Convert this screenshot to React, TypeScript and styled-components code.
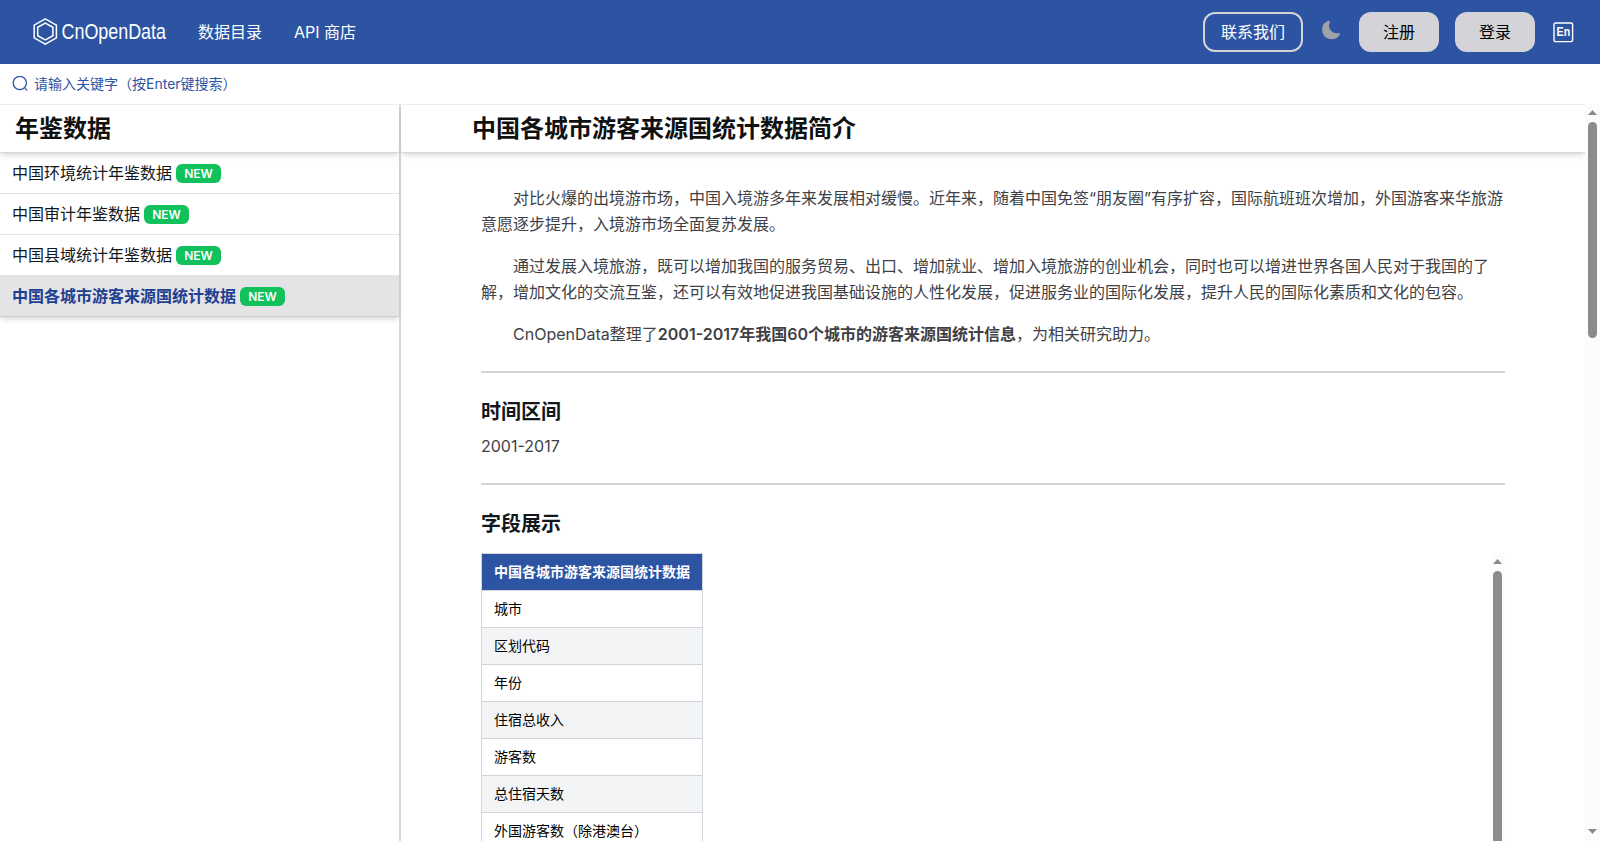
import React from "react";
import styled, { createGlobalStyle, css } from "styled-components";

const GlobalStyle = createGlobalStyle`
  *, *::before, *::after { box-sizing: border-box; }
  html, body { margin: 0; padding: 0; background: #fff; overflow: hidden; }
  body { font-family: Inter, "Noto Sans CJK SC", sans-serif; font-size: 16px; line-height: 24px; color: #11181c; }
  h1, h2, h3, p, ul { margin: 0; padding: 0; }
`;

const Page = styled.div`
  display: flex;
  flex-direction: column;
  height: 841px;
  overflow: hidden;
`;

const Header = styled.header`
  display: flex;
  align-items: center;
  height: 64px;
  flex: none;
  padding: 0 26px 0 32px;
  background: #2d54a3;
  color: #fff;
`;

const Logo = styled.svg`
  display: block;
  width: 144px;
  height: 40px;
  margin-right: 22px;
`;

const NavLink = styled.a`
  margin-right: 32px;
  white-space: nowrap;
`;

const Spacer = styled.div`
  flex: 1;
`;

const Button = styled.button<{ $outline?: boolean }>`
  height: 40px;
  width: ${(p) => (p.$outline ? 100 : 80)}px;
  padding: 0;
  border: ${(p) => (p.$outline ? "2px solid #d4d4d8" : "0")};
  border-radius: 12px;
  background: ${(p) => (p.$outline ? "transparent" : "#d4d4d8")};
  color: ${(p) => (p.$outline ? "#fff" : "#000")};
  font: inherit;
  & + & { margin-left: 16px; }
`;

const Moon = styled.svg`
  display: block;
  width: 22px;
  height: 22px;
  margin: 0 17px 4px;
`;

const LangIcon = styled.svg`
  display: block;
  width: 21px;
  height: 21px;
  margin: 1px 0 0 18px;
`;

const SearchBar = styled.div`
  display: flex;
  align-items: center;
  flex: none;
  height: 41px;
  padding-left: 12px;
  gap: 6px;
  border-bottom: 1px solid #ececee;
  color: #2d54a3;
  font-size: 14px;
  svg { display: block; }
`;

const Body = styled.div`
  display: flex;
  flex: 1;
  min-height: 0;
`;

const Sidebar = styled.aside`
  width: 401px;
  flex: none;
  border-right: 2px solid #d9d9db;
`;

const titleBar = css`
  height: 48px;
  border-bottom: 1px solid #d9d9db;
  box-shadow: 0 4px 6px -1px rgba(0, 0, 0, 0.1), 0 2px 4px -2px rgba(0, 0, 0, 0.1);
  font-size: 24px;
  line-height: 48px;
  font-weight: 600;
  color: #111;
`;

const SideTitle = styled.h2`
  ${titleBar}
  padding-left: 15px;
`;

const Menu = styled.ul`
  list-style: none;
  box-shadow: 0 4px 6px -1px rgba(0, 0, 0, 0.1), 0 2px 4px -2px rgba(0, 0, 0, 0.1);
`;

const MenuItem = styled.li<{ $active?: boolean }>`
  display: flex;
  align-items: center;
  gap: 4px;
  height: 41px;
  padding-left: 12px;
  border-bottom: 1px solid ${(p) => (p.$active ? "#cfcfd3" : "#e4e4e7")};
  background: ${(p) => (p.$active ? "#e4e4e7" : "transparent")};
  color: ${(p) => (p.$active ? "#1e4091" : "#11181c")};
  font-weight: ${(p) => (p.$active ? 600 : 400)};
`;

const Badge = styled.span`
  width: 45px;
  height: 19px;
  border-radius: 6px;
  background: #10c15c;
  color: #fff;
  font-size: 12px;
  line-height: 19px;
  font-weight: 600;
  text-align: center;
`;

const Main = styled.main`
  flex: 1;
  min-width: 0;
`;

const MainTitle = styled.h1`
  ${titleBar}
  padding-left: 71px;
`;

const Article = styled.article`
  width: 1024px;
  margin: 32px 0 0 80px;
  color: #3f3f46;
`;

const Paragraph = styled.p`
  margin-bottom: 16px;
  line-height: 26px;
  text-indent: 32px;
  white-space: nowrap;
  strong { font-weight: 600; }
  &:last-of-type { margin-bottom: 24px; }
`;

const Intro = styled.section``;

const Rule = styled.div`
  height: 2px;
  background: #d4d4d8;
`;

const Heading = styled.h3`
  padding: 25px 0 7px;
  font-size: 20px;
  line-height: 28px;
  font-weight: 600;
  color: #11181c;
`;

const Period = styled.p`
  line-height: 26px;
  padding-bottom: 24px;
`;

const TableArea = styled.div`
  display: flex;
  justify-content: space-between;
  align-items: stretch;
  margin-top: 8px;
  height: 440px;
`;

const Table = styled.div`
  width: 222px;
  border: 1px solid #d1d5db;
  border-bottom: 0;
  font-size: 14px;
  color: #000;
`;

const Cell = styled.div<{ $head?: boolean }>`
  height: 37px;
  padding-left: 12px;
  line-height: 36px;
  border-bottom: 1px solid #d1d5db;
  white-space: nowrap;
  &:nth-child(odd) { background: #f3f4f6; }
  ${(p) =>
    p.$head &&
    css`
      && { background: #2d54a3; }
      color: #fff;
      font-weight: 600;
    `}
`;

const Track = styled.div<{ $page?: boolean }>`
  display: flex;
  flex-direction: column;
  align-items: center;
  flex: none;
  width: 15px;
  margin-top: ${(p) => (p.$page ? -1 : 0)}px;
  background: #fcfcfc;
`;

const Thumb = styled.div<{ $height: number }>`
  width: 9px;
  height: ${(p) => p.$height}px;
  border-radius: 5px;
  background: #8b8b8b;
  margin-top: 7px;
`;

const Arrow = styled.div<{ $down?: boolean }>`
  width: 9px;
  height: 5px;
  margin: ${(p) => (p.$down ? "auto 0 7px" : "6px 0 0")};
  background: #8b8b8b;
  clip-path: ${(p) =>
    p.$down ? "polygon(0 0, 100% 0, 50% 100%)" : "polygon(0 100%, 100% 100%, 50% 0)"};
`;

const menu = [
  { label: "中国环境统计年鉴数据" },
  { label: "中国审计年鉴数据" },
  { label: "中国县域统计年鉴数据" },
  { label: "中国各城市游客来源国统计数据", active: true },
];

const fields = ["城市", "区划代码", "年份", "住宿总收入", "游客数", "总住宿天数", "外国游客数（除港澳台）"];

export default function App() {
  return (
    <>
      <GlobalStyle />
      <Page>
        <Header>
          <Logo viewBox="0 -4 144 40">
            <g fill="none" stroke="#fff" strokeLinejoin="miter">
              <path d="M13.3 2.9 L24.4 9.2 V21.8 L13.3 28.1 L2.2 21.8 V9.2 Z" strokeWidth="1.5" />
              <path d="M13.3 7.1 L20.9 11.3 V19.7 L13.3 23.9 L5.7 19.7 V11.3 Z" strokeWidth="1.5" />
            </g>
            <text x="29.5" y="23.2" fill="#fff" fontFamily="Liberation Sans" fontSize="21.5" textLength="104.5" lengthAdjust="spacingAndGlyphs">
              CnOpenData
            </text>
          </Logo>
          <NavLink>数据目录</NavLink>
          <NavLink>API 商店</NavLink>
          <Spacer />
          <Button $outline>联系我们</Button>
          <Moon viewBox="0 0 24 24">
            <path
              d="M21.53 15.93c-.16-.27-.61-.69-1.73-.49a8.46 8.46 0 0 1-1.88.13 8.409 8.409 0 0 1-5.91-2.82 8.068 8.068 0 0 1-1.44-8.66c.44-1.01.13-1.54-.09-1.76s-.77-.55-1.83-.11a10.318 10.318 0 0 0-6.32 10.21 10.475 10.475 0 0 0 7.04 8.99 10 10 0 0 0 2.89.55c.16.01.32.02.48.02a10.5 10.5 0 0 0 8.47-4.27c.67-.93.49-1.519.32-1.79z"
              fill="#a1a1aa"
            />
          </Moon>
          <Button>注册</Button>
          <Button>登录</Button>
          <LangIcon viewBox="0 0 21 21">
            <rect x="1" y="1" width="18.6" height="18.6" rx="1.5" fill="none" stroke="#fff" strokeWidth="1.4" />
            <text x="3.6" y="14.4" fill="#fff" fontFamily="Liberation Sans" fontWeight="700" fontSize="12" textLength="13.6" lengthAdjust="spacingAndGlyphs">
              En
            </text>
          </LangIcon>
        </Header>
        <SearchBar>
          <svg width="16" height="16" viewBox="0 0 16 16" fill="none" stroke="#2d54a3" strokeWidth="1.3" strokeLinecap="round">
            <circle cx="7.8" cy="7" r="6.6" />
            <path d="M13.3 12.6 L14.8 14.1" />
          </svg>
          请输入关键字（按Enter键搜索）
        </SearchBar>
        <Body>
          <Sidebar>
            <SideTitle>年鉴数据</SideTitle>
            <Menu>
              {menu.map((m) => (
                <MenuItem key={m.label} $active={m.active}>
                  {m.label}
                  <Badge>NEW</Badge>
                </MenuItem>
              ))}
            </Menu>
          </Sidebar>
          <Main>
            <MainTitle>中国各城市游客来源国统计数据简介</MainTitle>
            <Article>
              <Intro>
                <Paragraph>
                  对比火爆的出境游市场，中国入境游多年来发展相对缓慢。近年来，随着中国免签“朋友圈”有序扩容，国际航班班次增加，外国游客来华旅游
                  <br />
                  意愿逐步提升，入境游市场全面复苏发展。
                </Paragraph>
                <Paragraph>
                  通过发展入境旅游，既可以增加我国的服务贸易、出口、增加就业、增加入境旅游的创业机会，同时也可以增进世界各国人民对于我国的了
                  <br />
                  解，增加文化的交流互鉴，还可以有效地促进我国基础设施的人性化发展，促进服务业的国际化发展，提升人民的国际化素质和文化的包容。
                </Paragraph>
                <Paragraph>
                  CnOpenData整理了<strong>2001-2017年我国60个城市的游客来源国统计信息</strong>，为相关研究助力。
                </Paragraph>
              </Intro>
              <Rule />
              <Heading>时间区间</Heading>
              <Period>2001-2017</Period>
              <Rule />
              <Heading>字段展示</Heading>
              <TableArea>
                <Table>
                  <Cell $head>中国各城市游客来源国统计数据</Cell>
                  {fields.map((f) => (
                    <Cell key={f}>{f}</Cell>
                  ))}
                </Table>
                <Track>
                  <Arrow />
                  <Thumb $height={400} />
                </Track>
              </TableArea>
            </Article>
          </Main>
          <Track $page>
            <Arrow />
            <Thumb $height={216} />
            <Arrow $down />
          </Track>
        </Body>
      </Page>
    </>
  );
}
